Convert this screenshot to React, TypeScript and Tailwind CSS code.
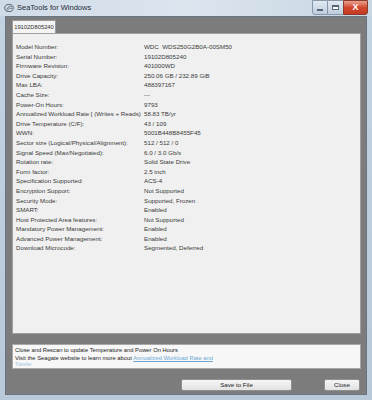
import React from 'react';

const rows: [string, string][] = [
  ['Model Number:', 'WDC  WDS250G2B0A-00SM50'],
  ['Serial Number:', '19102D805240'],
  ['Firmware Revision:', '401000WD'],
  ['Drive Capacity:', '250.06 GB / 232.89 GiB'],
  ['Max LBA:', '488397167'],
  ['Cache Size:', '---'],
  ['Power-On Hours:', '9793'],
  ['Annualized Workload Rate [ (Writes + Reads)', '58.83 TB/yr'],
  ['Drive Temperature (C/F):', '43 / 109'],
  ['WWN:', '5001B448B8455F45'],
  ['Sector size (Logical/Physical/Alignment):', '512 / 512 / 0'],
  ['Signal Speed (Max/Negotiated):', '6.0 / 3.0 Gb/s'],
  ['Rotation rate:', 'Solid State Drive'],
  ['Form factor:', '2.5 inch'],
  ['Specification Supported:', 'ACS-4'],
  ['Encryption Support:', 'Not Supported'],
  ['Security Mode:', 'Supported, Frozen'],
  ['SMART:', 'Enabled'],
  ['Host Protected Area features:', 'Not Supported'],
  ['Mandatory Power Management:', 'Enabled'],
  ['Advanced Power Management:', 'Enabled'],
  ['Download Microcode:', 'Segmented, Deferred'],
];

export default function App() {
  return (
    <div
      className="w-[372px] h-[400px] flex flex-col bg-gradient-to-b from-[#c4d3e2] to-[#b9c9da] overflow-hidden"
      style={{ fontFamily: '"Liberation Sans", Arial, sans-serif' }}
    >
      {/* title bar */}
      <div className="h-[16px] flex items-center relative bg-gradient-to-r from-[#cfdbe7] via-[#dbe5ee] to-[#c9d6e3]">
        <svg className="ml-[4px] w-[10px] h-[10px]" viewBox="0 0 10 10">
          <ellipse cx="5" cy="5" rx="4.3" ry="3.6" fill="none" stroke="#5b6b7c" strokeWidth="1" />
          <path d="M2.5 6.5 Q5 2 8 4" fill="none" stroke="#5b6b7c" strokeWidth="0.9" />
          <path d="M3 7.5 Q5.5 4 8.3 5.5" fill="none" stroke="#5b6b7c" strokeWidth="0.8" />
        </svg>
        <span className="ml-[3px] text-[7.5px] text-[#1e2b38]">SeaTools for Windows</span>
        <div className="ml-auto mr-[4px] flex h-[15px] self-start">
          <div className="w-[16px] h-full border border-[#8797aa] rounded-bl-[3px] bg-gradient-to-b from-[#e2e9f1] to-[#bfcddc] flex items-center justify-center">
            <div className="w-[6px] h-[2px] bg-white border border-[#5a6675] mt-[4px]" />
          </div>
          <div className="w-[15px] h-full border-y border-[#8797aa] bg-gradient-to-b from-[#e2e9f1] to-[#bfcddc] flex items-center justify-center">
            <div className="w-[7px] h-[5px] border border-[#5a6675] border-t-2 bg-white" />
          </div>
          <div className="w-[25px] h-full border border-[#8a3b2c] rounded-br-[3px] bg-gradient-to-b from-[#e8a190] via-[#d2482e] to-[#c53a22] flex items-center justify-center text-white text-[9px] font-bold">
            X
          </div>
        </div>
      </div>

      {/* body */}
      <div className="flex-1 mx-[5px] bg-[#7c7c7c] border border-[#6b7482] flex flex-col pl-[6px] pr-[5px]">
        {/* tab */}
        <div className="mt-[3px] w-[44px] h-[13px] bg-[#f4f4f4] border border-b-0 border-[#9a9a9a] text-[5.8px] text-[#333] flex items-center justify-center">
          19102D805240
        </div>
        {/* info panel */}
        <div className="h-[301px] bg-[#f0f0f0] border border-[#a0a0a0] pt-[8px] pl-[3px] text-[6.2px] text-[#3a3a3a]">
          {rows.map(([k, v]) => (
            <div key={k} className="flex h-[9.6px] leading-[9.6px] whitespace-pre">
              <div className="w-[128px]">{k}</div>
              <div>{v}</div>
            </div>
          ))}
        </div>

        {/* message box */}
        <div className="mt-[10px] h-[25px] bg-[#f7f7f7] border border-[#a8a8a8] px-[2px] pt-[2px] text-[5.8px] leading-[7.5px] text-[#222] overflow-hidden">
          <div>Close and Rescan to update Temperature and Power On Hours</div>
          <div className="whitespace-nowrap">
            Visit the Seagate website to learn more about{' '}
            <span className="text-[#6aa9d6] underline">Annualized Workload Rate and</span>
          </div>
          <div className="text-[#9bc3e0] text-[4.5px] leading-[5px]">Transfer</div>
        </div>

        {/* buttons */}
        <div className="mt-[10px] flex items-start">
          <div className="ml-[169px] w-[111px] h-[12px] bg-gradient-to-b from-[#f6f6f6] to-[#e2e2e2] border border-[#8f8f8f] rounded-[2px] text-[6.2px] text-[#222] flex items-center justify-center">
            Save to File
          </div>
          <div className="ml-[32px] w-[36px] h-[12px] bg-gradient-to-b from-[#f6f6f6] to-[#e2e2e2] border border-[#8f8f8f] rounded-[2px] text-[6.2px] text-[#222] flex items-center justify-center">
            Close
          </div>
        </div>
      </div>
      <div className="h-[5px]" />
    </div>
  );
}
